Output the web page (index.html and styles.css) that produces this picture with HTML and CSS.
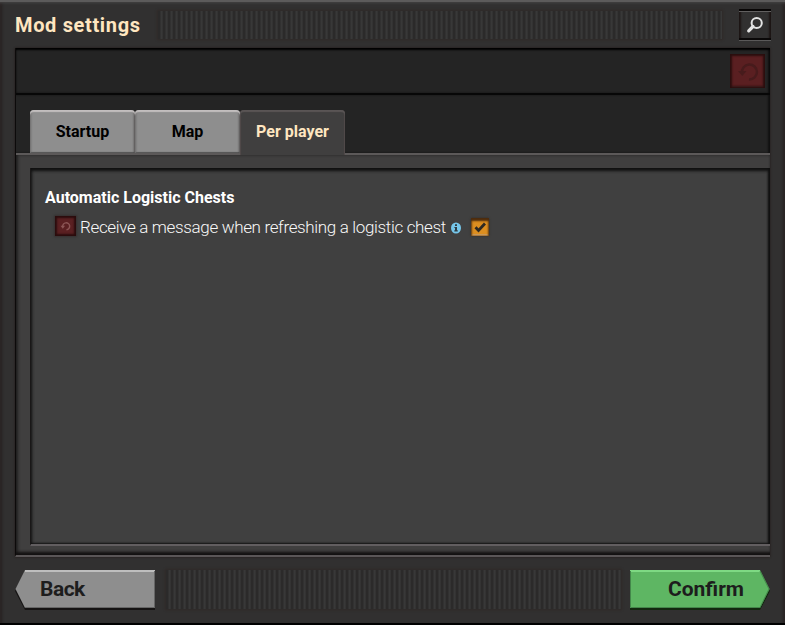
FILE: index.html
```html
<!DOCTYPE html>
<html lang="en">
<head>
<meta charset="utf-8">
<title>Mod settings</title>
<link rel="stylesheet" href="styles.css">
</head>
<body>
<div class="window">
  <header class="titlebar">
    <h1 class="title">Mod settings</h1>
    <div class="grip"></div>
    <button class="search" aria-label="Search">
      <svg width="18" height="18" viewBox="0 0 18 18"><circle cx="10.700" cy="7" r="5.100" fill="none" stroke="#e3e3e3" stroke-width="2"/><path d="M7 10.500 2.700 14.800" stroke="#e3e3e3" stroke-width="3.200" stroke-linecap="round"/></svg>
    </button>
  </header>
  <main class="frame">
    <div class="toolbar">
      <button class="reset-all" aria-label="Reset all">
        <svg width="24" height="24" viewBox="0 0 24 24"><path d="M6 14a7.500 7.500 0 1 1 7 6.500" fill="none" stroke="#471b1c" stroke-width="2.500"/><path d="M2 12h8.500l-4.200 5z" fill="#471b1c"/></svg>
      </button>
    </div>
    <nav class="tabs">
      <div class="tab"><span>Startup</span></div>
      <div class="tab"><span>Map</span></div>
      <div class="tab active"><span>Per player</span></div>
    </nav>
    <div class="pane">
      <section class="panel">
        <h2 class="group">Automatic Logistic Chests</h2>
        <div class="setting">
          <button class="reset" aria-label="Reset">
            <svg width="12" height="12" viewBox="0 0 12 12"><path d="M2.700 6.800a3.500 3.500 0 1 1 3.800 3" fill="none" stroke="#8b5555" stroke-width="1.400"/><path d="M.5 5.700h4.600l-2.300 3z" fill="#8b5555"/></svg>
          </button>
          <span class="label">Receive a message when refreshing a logistic chest</span>
          <svg class="info" width="10" height="12" viewBox="0 0 10 12"><ellipse cx="5" cy="6" rx="5" ry="5.600" fill="#76c7eb"/><path d="M4 2.300h2v1.600H4zM3.400 5H6v3.300h.8v1.200H3.300V8.300H4V6.100h-.6z" fill="#303c42"/></svg>
          <span class="check"><svg width="12" height="12" viewBox="0 0 12 12"><path d="m1.500 6.300 3 3.200L11 2.500" fill="none" stroke="#2d2923" stroke-width="2.800"/></svg></span>
        </div>
      </section>
    </div>
  </main>
  <footer class="actions">
    <button class="back"><svg width="140" height="40" viewBox="0 0 140 40"><path d="M10 2H140V40H10L0 21Z" fill="#151313"/><path d="M10 0H140V38H10L.5 19Z" fill="#8e8e8e"/><path d="M10 1H140" stroke="#bebebe" stroke-width="2"/><path d="M10 37.500H140M139.500 1V38" stroke="#666" fill="none"/></svg><span>Back</span></button>
    <div class="grip"></div>
    <button class="confirm"><svg width="140" height="40" viewBox="0 0 140 40"><path d="M0 2H130L140 21 130 40H0Z" fill="#12280f"/><path d="M0 0H130L139.500 19 130 38H0Z" fill="#5eb663"/><path d="M0 1H130" stroke="#7ed983" stroke-width="2"/><path d="M.5 1V37.500H130L139 19 130 1" stroke="#43874a" fill="none"/></svg><span>Confirm</span></button>
  </footer>
</div>
</body>
</html>
```

FILE: styles.css
```css
* { box-sizing: border-box; }
body { margin: 0; background: #000; font-family: Roboto, "Open Sans", sans-serif; }
h1, h2 { margin: 0; }
button { border: 0; padding: 0; font: inherit; background: none; }
.window {
  width: 785px; height: 625px; padding: 0 15px; background: #313030;
  display: flex; flex-direction: column;
  box-shadow: inset 0 2px #5c5b5b, inset 0 -2px #000, inset 0 4px 3px -1px #464545, inset 2px 0 3px #272020, inset -2px 0 3px #272020;
}
.titlebar { height: 48px; display: flex; align-items: center; padding-top: 2px; }
.title { width: 140px; font-size: 20px; line-height: 44px; color: #ffe6c0; letter-spacing: .65px; white-space: nowrap; }
.grip {
  flex: 1; height: 28px;
  background: repeating-linear-gradient(90deg, #2b2a2a 0 2px, #383838 3px 4px, #2f2e2e 5px);
  box-shadow: 0 0 2px 1px #302a28;
}
.titlebar .grip { margin: 0 17px 0 3px; }
.search {
  width: 32px; height: 32px; margin-right: -1px; display: grid; place-items: center; background: #313030;
  box-shadow: inset 0 2px #080606, inset 0 3px #626060, inset 0 -1px #5a5959, inset 0 -3px #0a0808, inset 2px 0 2px #1c1514, inset -2px 0 2px #1c1514;
}
.frame { height: 509px; width: 755px; background: #242424; display: flex; flex-direction: column; border-left: 1px solid #0c0a0a; border-bottom: 2px solid #5a5657; box-shadow: 0 0 2px #201816; }
.toolbar { height: 47px; padding: 6px 5px 0 0; display: flex; justify-content: flex-end; border-bottom: 2px solid #070707; box-shadow: inset 0 2px 2px #000, inset -2px 0 2px #111; }
.reset-all { width: 35px; height: 34px; display: grid; place-items: center; background: #5a1f21; box-shadow: inset 0 0 2px 2px #2b0e0e, inset 0 -2px #6d3a3a; }
.tabs { height: 60px; padding: 15px 0 0 14px; display: flex; border-bottom: 2px solid #5c5959; box-shadow: inset -2px 0 2px #111; }
.tab {
  width: 105px; height: 43px; padding-top: 10px; text-align: center; font-size: 16px; font-weight: 700; line-height: 23px;
  color: #000; background: #8e8e8e; border-radius: 4px 4px 0 0;
  box-shadow: inset 0 2px 1px #c2bebe, inset 2px 0 2px -1px #656464, inset -2px 0 2px -1px #484646, inset 0 -1px 1px #555;
}
.tab.active { height: 46px; color: #ffe6c0; background: #403f3f; box-shadow: inset 0 2px 1px #5a5555, inset 2px 0 1px -1px #504a4a, inset -1px 0 1px #514b4b; clip-path: inset(0 0 1px); }
.pane { flex: 1; background: #403f3f; padding: 13px 0 9px 14px; display: flex; box-shadow: inset 0 -4px 3px -1px #121010, inset 2px 0 3px #222; }
.panel { flex: 1; padding: 18px 0 0 14px; background: #404040; border-left: 1px solid #191717; border-bottom: 2px solid #625e60; box-shadow: inset 0 2px 3px 1px #101010, inset -2px -1px 2px #151515; }
.group { font-size: 16px; line-height: 24px; color: #fff; }
.setting { display: flex; align-items: center; height: 36px; margin-top: -2px; padding-left: 10px; }
.reset { width: 21px; height: 20px; display: grid; place-items: center; background: #5a2022; box-shadow: inset 0 0 2px 2px #2b0c0d, 0 0 2px 1px #35302f; }
.label { width: 366px; margin-left: 4px; padding-top: 1px; font-size: 17px; font-weight: 300; letter-spacing: -.34px; color: #f8f8f8; white-space: nowrap; }
.info { margin: 4px 0 0 5px; }
.check { margin: 2px 0 0 10px; width: 18px; height: 18px; display: grid; place-items: center; background: #dc8e20; box-shadow: inset 0 3px 2px #4d2c0d, inset 1px 0 2px #7c4f18, inset -1px 0 2px #7c4f18, inset 0 -2px #d3a160, 0 0 2px #332a24; }
.actions { height: 68px; padding-top: 13px; display: flex; align-items: flex-start; }
.actions .grip { margin: 0 9px 0 11px; height: 39px; }
.back, .confirm { width: 140px; height: 40px; display: grid; align-items: start; font-size: 21px; font-weight: 700; line-height: 38px; color: #1d1d1d; }
.back { letter-spacing: -.5px; }
.back > *, .confirm > * { grid-area: 1 / 1; }
.back span { padding-left: 25px; text-align: left; }
.confirm span { padding-left: 38px; text-align: left; }
```
